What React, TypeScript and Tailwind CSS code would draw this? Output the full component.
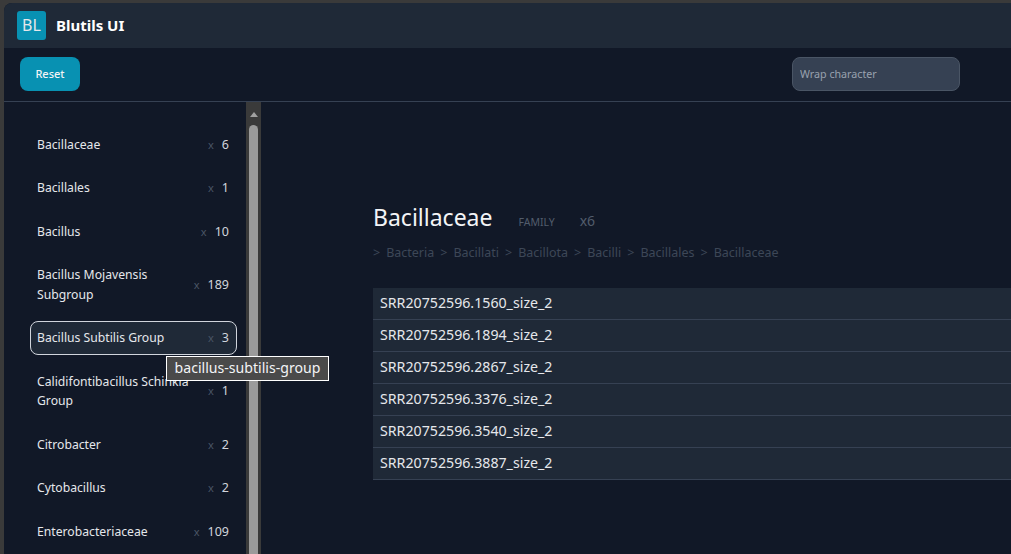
const TAXA: { name: string; count: number; active?: boolean }[] = [
  { name: "Bacillaceae", count: 6 },
  { name: "Bacillales", count: 1 },
  { name: "Bacillus", count: 10 },
  { name: "Bacillus Mojavensis Subgroup", count: 189 },
  { name: "Bacillus Subtilis Group", count: 3, active: true },
  { name: "Calidifontibacillus Schinkia Group", count: 1 },
  { name: "Citrobacter", count: 2 },
  { name: "Cytobacillus", count: 2 },
  { name: "Enterobacteriaceae", count: 109 },
];

const LINEAGE = ["Bacteria", "Bacillati", "Bacillota", "Bacilli", "Bacillales", "Bacillaceae"];

const SEQUENCES = [
  "SRR20752596.1560_size_2",
  "SRR20752596.1894_size_2",
  "SRR20752596.2867_size_2",
  "SRR20752596.3376_size_2",
  "SRR20752596.3540_size_2",
  "SRR20752596.3887_size_2",
];

function TaxonRow({ name, count, active }: { name: string; count: number; active?: boolean }) {
  return (
    <div
      className={`flex shrink-0 items-center justify-between rounded-lg border py-[6px] pl-[6px] pr-[7px] text-[13px] leading-[19.5px] ${
        active ? "border-gray-300 bg-[#1f2937]" : "border-transparent"
      }`}
    >
      <span className="text-[12.2px] text-gray-200">{name}</span>
      <span className="ml-[14px] flex shrink-0 items-center whitespace-nowrap text-[12.5px] text-gray-300">
        <span className="mr-[8px] text-[11px] text-gray-600">x</span>
        {count}
      </span>
    </div>
  );
}

export default function App() {
  return (
    <div className="h-[554px] w-[1011px] overflow-hidden bg-[#3a3a3a] pl-1 pt-[3px] font-['Noto_Sans','Open_Sans',sans-serif]">
      <div className="flex h-[551px] flex-col overflow-hidden rounded-tl-lg bg-[#111827]">
        <header className="flex h-[45px] shrink-0 items-center gap-[10px] bg-[#1f2937] pb-[1px] pl-[13px]">
          <div className="flex h-[29px] w-[29px] items-center justify-center rounded-[3px] bg-[#0891b2] text-base text-gray-200">
            BL
          </div>
          <span className="text-[15px] font-bold text-white">Blutils UI</span>
        </header>

        <div className="flex h-[54px] shrink-0 items-center justify-between border-b border-gray-700 pb-[1px] pl-4 pr-[51px]">
          <button className="h-[34px] w-[60px] rounded-lg bg-[#0891b2] text-[11px] font-medium text-gray-100">
            Reset
          </button>
          <input
            placeholder="Wrap character"
            className="h-[34px] w-[168px] rounded-lg border border-gray-600 bg-gray-700 px-[7px] text-[10.7px] text-gray-200 outline-none placeholder:text-gray-400"
          />
        </div>

        <div className="relative flex min-h-0 flex-1">
          <aside className="flex w-[242px] shrink-0 flex-col gap-[10px] overflow-hidden pb-4 pl-[26px] pr-[9px] pt-[25.6px]">
            {TAXA.map((t) => (
              <TaxonRow key={t.name} {...t} />
            ))}
          </aside>

          {/* scrollbar track */}
          <div className="relative h-full w-[15px] shrink-0 bg-[#3a3a3a]">
            <div className="mx-auto mt-[10px] h-0 w-0 border-x-[4px] border-b-[5px] border-x-transparent border-b-[#a0a0a0]" />
            <div className="mx-auto mt-[8px] h-[440px] w-[9px] rounded-full bg-[#9b9b9b]" />
          </div>

          <main className="min-w-0 flex-1 pl-[112px] pt-[99px]">
            <div className="flex items-baseline">
              <h1 className="text-[23px] leading-8 text-gray-100">Bacillaceae</h1>
              <span className="ml-[26px] text-[10.5px] text-[#525c6b]">FAMILY</span>
              <span className="ml-[25px] text-sm text-[#525c6b]">x6</span>
            </div>
            <div className="mt-[10px] flex gap-[6px] text-[12.5px] leading-5 text-[#3d4757]">
              {LINEAGE.map((l) => (
                <span key={l} className="flex gap-[6px]">
                  <span>&gt;</span>
                  {l}
                </span>
              ))}
            </div>
            <div className="mt-[25px]">
              {SEQUENCES.map((s) => (
                <div
                  key={s}
                  className="flex h-8 items-center border-b border-gray-700 bg-[#1f2937] px-[7px] pb-[2px] text-[14.2px] text-gray-200"
                >
                  {s}
                </div>
              ))}
            </div>
          </main>

          {/* native title tooltip */}
          <div className="absolute left-[162px] top-[254px] z-10 flex h-[25px] w-[163px] items-center justify-center border border-white bg-[#4a4a4a] pb-[2px] text-[14.1px] text-gray-100">
            bacillus-subtilis-group
          </div>
        </div>
      </div>
    </div>
  );
}
